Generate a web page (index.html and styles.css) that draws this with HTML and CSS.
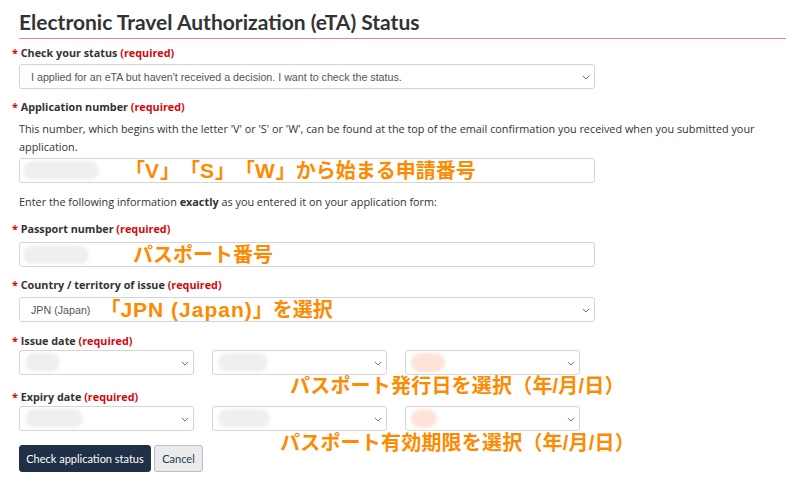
FILE: index.html
```html
<!DOCTYPE html>
<html lang="en">
<head>
<meta charset="utf-8">
<title>eTA Status</title>
<link rel="stylesheet" href="styles.css">
</head>
<body>
<div class="page">
  <h1 class="title">Electronic Travel Authorization (eTA) Status</h1>

  <div class="label l1"><span class="star">*</span> Check your status <span class="req">(required)</span></div>
  <div class="select s1">
    <span class="seltext">I applied for an eTA but haven't received a decision. I want to check the status.</span>
    <svg class="chev" width="8" height="5" viewBox="0 0 8 5"><path d="M0.8 0.8 L4 4 L7.2 0.8" fill="none" stroke="#777" stroke-width="1"/></svg>
  </div>

  <div class="label l2"><span class="star">*</span> Application number <span class="req">(required)</span></div>
  <p class="help">This number, which begins with the letter 'V' or 'S' or 'W', can be found at the top of the email confirmation you received when you submitted your application.</p>
  <div class="input i1">
    <span class="blob b-app"></span>
    <span class="anno a-app">「<span class="lat">V</span>」「<span class="lat">S</span>」「<span class="lat">W</span>」から始まる申請番号</span>
  </div>

  <p class="help h2">Enter the following information <b>exactly</b> as you entered it on your application form:</p>

  <div class="label l3"><span class="star">*</span> Passport number <span class="req">(required)</span></div>
  <div class="input i2">
    <span class="blob b-pass"></span>
    <span class="anno a-pass">パスポート番号</span>
  </div>

  <div class="label l4"><span class="star">*</span> Country / territory of issue <span class="req">(required)</span></div>
  <div class="select s4">
    <span class="seltext">JPN (Japan)</span>
    <span class="anno a-country">「<span class="lat">JPN (Japan)</span>」を選択</span>
    <svg class="chev" width="8" height="5" viewBox="0 0 8 5"><path d="M0.8 0.8 L4 4 L7.2 0.8" fill="none" stroke="#777" stroke-width="1"/></svg>
  </div>

  <div class="label l5"><span class="star">*</span> Issue date <span class="req">(required)</span></div>
  <div class="daterow r1">
    <div class="select dsel"><span class="blob d-y1"></span><svg class="chev" width="8" height="5" viewBox="0 0 8 5"><path d="M0.8 0.8 L4 4 L7.2 0.8" fill="none" stroke="#777" stroke-width="1"/></svg></div>
    <div class="select dsel"><span class="blob d-m1"></span><svg class="chev" width="8" height="5" viewBox="0 0 8 5"><path d="M0.8 0.8 L4 4 L7.2 0.8" fill="none" stroke="#777" stroke-width="1"/></svg></div>
    <div class="select dsel"><span class="blob peach d-d1"></span><svg class="chev" width="8" height="5" viewBox="0 0 8 5"><path d="M0.8 0.8 L4 4 L7.2 0.8" fill="none" stroke="#777" stroke-width="1"/></svg></div>
    <span class="anno dateanno da1">パスポート発行日を選択（年/月/日）</span>
  </div>

  <div class="label l6"><span class="star">*</span> Expiry date <span class="req">(required)</span></div>
  <div class="daterow r2">
    <div class="select dsel"><span class="blob d-y2"></span><svg class="chev" width="8" height="5" viewBox="0 0 8 5"><path d="M0.8 0.8 L4 4 L7.2 0.8" fill="none" stroke="#777" stroke-width="1"/></svg></div>
    <div class="select dsel"><span class="blob d-m2"></span><svg class="chev" width="8" height="5" viewBox="0 0 8 5"><path d="M0.8 0.8 L4 4 L7.2 0.8" fill="none" stroke="#777" stroke-width="1"/></svg></div>
    <div class="select dsel"><span class="blob peach d-d2"></span><svg class="chev" width="8" height="5" viewBox="0 0 8 5"><path d="M0.8 0.8 L4 4 L7.2 0.8" fill="none" stroke="#777" stroke-width="1"/></svg></div>
    <span class="anno dateanno da2">パスポート有効期限を選択（年/月/日）</span>
  </div>

  <div class="buttons">
    <button class="btn primary">Check application status</button>
    <button class="btn secondary">Cancel</button>
  </div>
</div>
</body>
</html>
```
FILE: styles.css
```css
html, body {
  margin: 0;
  padding: 0;
  background: #ffffff;
}
.page {
  padding: 0 14px 0 19px;
  font-family: "Open Sans", "Noto Sans", sans-serif;
  color: #333333;
}
.title {
  margin: 0;
  padding: 9px 0 4px 0;
  font-family: Lato, "Open Sans", sans-serif;
  font-weight: 700;
  font-size: 21px;
  line-height: 25px;
  color: #333333;
  border-bottom: 1px solid #e08a8a;
}
.label {
  font-family: "Open Sans", "Noto Sans", sans-serif;
  font-weight: 700;
  font-size: 10.8px;
  line-height: 16px;
  color: #333333;
  margin-left: -7px;
}
.star, .req {
  color: #d3080c;
}
.l1 { margin-top: 6px; }
.l2 { margin-top: 10px; }
.l3 { margin-top: 10px; }
.l4 { margin-top: 10px; }
.l5 { margin-top: 11px; }
.l6 { margin-top: 14px; }

.select, .input {
  box-sizing: border-box;
  height: 25px;
  width: 576px;
  border: 1px solid #d4d4d4;
  border-radius: 3px;
  background: #ffffff;
  display: flex;
  align-items: center;
  position: relative;
}
.select {
  padding-left: 11px;
}
.seltext {
  font-family: "Liberation Sans", Arial, sans-serif;
  font-size: 10.7px;
  color: #555555;
  white-space: nowrap;
}
.chev {
  position: absolute;
  right: 4px;
  top: 10px;
}
.s1 { margin-top: 3px; }
.s4 { margin-top: 4px; }

.help {
  margin: 5px 0 0 0;
  font-size: 10.85px;
  line-height: 18px;
  color: #333333;
}
.help b { font-weight: 700; }
.h2 { margin-top: 10px; }

.input { padding-left: 3px; }
.i1 { margin-top: 2px; }
.i2 { margin-top: 5px; }

.blob {
  display: block;
  height: 19px;
  border-radius: 10px;
  background: #efefef;
  filter: blur(1.5px);
  flex: none;
}
.blob.peach { background: #fde3d8; }
.b-app { width: 76px; }
.b-pass { width: 66px; }

.anno {
  font-family: "Liberation Sans", "Noto Sans CJK JP", sans-serif;
  font-weight: 700;
  font-size: 20px;
  line-height: 20px;
  color: #ff8a00;
  white-space: nowrap;
  text-spacing-trim: space-all;
}
.lat {
  font-size: 21px;
  letter-spacing: 1px;
}
.a-app { margin-left: 26px; }
.a-pass { margin-left: 44px; }
.a-country { margin-left: 10px; }

.daterow {
  display: flex;
  gap: 18px;
  margin-top: 1px;
  position: relative;
}
.dsel {
  width: 175px;
  padding-left: 5px;
}
.dateanno {
  position: absolute;
  letter-spacing: 0.2px;
}
.da1 { left: 271px; top: 26px; }
.da2 { left: 261px; top: 27px; }
.d-y1 { width: 35px; }
.d-m1 { width: 50px; }
.d-d1 { width: 34px; }
.d-y2 { width: 58px; }
.d-m2 { width: 52px; }
.d-d2 { width: 26px; }

.buttons {
  display: flex;
  gap: 3px;
  margin-top: 14px;
}
.btn {
  height: 27px;
  border-radius: 3px;
  font-family: Lato, "Open Sans", sans-serif;
  font-size: 11px;
  padding: 0;
  white-space: nowrap;
  cursor: pointer;
}
.primary {
  background: #1f3047;
  color: #ffffff;
  border: 1px solid #1f3047;
  width: 132px;
}
.secondary {
  background: #eaebed;
  color: #2c3a4b;
  border: 1px solid #bdbdbd;
  width: 49px;
}
```
